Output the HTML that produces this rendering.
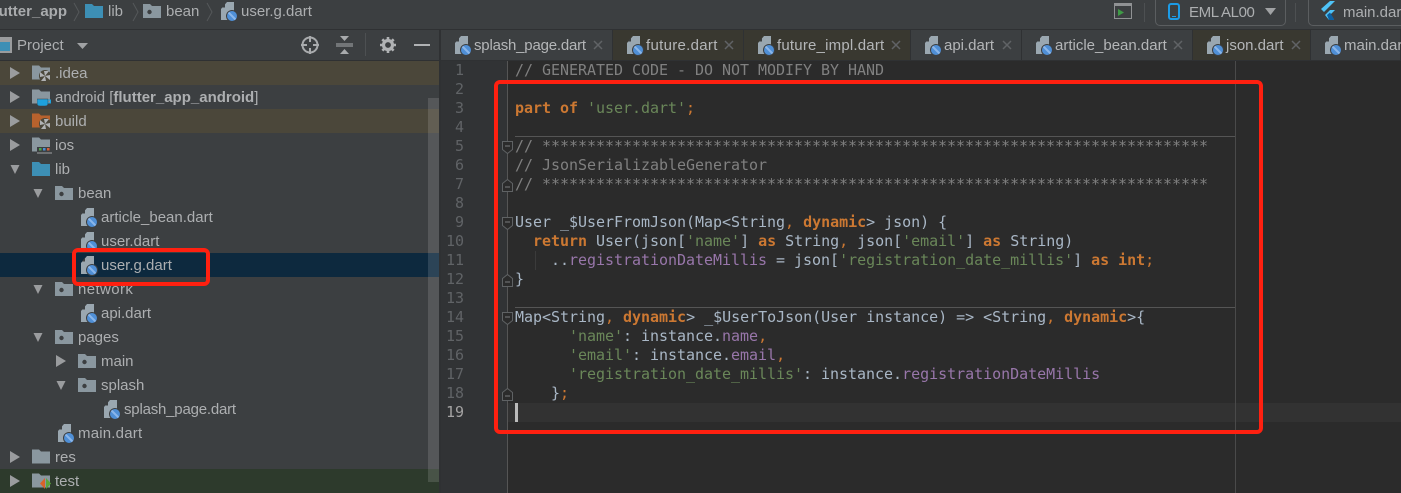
<!DOCTYPE html>
<html><head><meta charset="utf-8">
<style>
html,body{margin:0;padding:0;background:#3c3f41}
#r{position:relative;width:1401px;height:493px;overflow:hidden;background:#3c3f41;font-family:"Liberation Sans",sans-serif;font-size:15px;color:#adafb1}
#r div,#r svg{position:absolute}
.b{left:0;width:439px;height:24px}
.t{height:24px;line-height:24px;white-space:nowrap;margin-top:1px}
.tab{top:30px;height:30px;border-right:1px solid #2f3133;box-sizing:border-box}
.tl{top:31px;height:30px;line-height:30px;white-space:nowrap;color:#b4b6b8}
.x{top:40px;width:10px;height:10px}
.c{left:515px;height:19px;line-height:19px;white-space:pre;font-family:"DejaVu Sans Mono","Liberation Mono",monospace;font-size:15px;letter-spacing:-.03px;color:#a9b7c6}
.n{left:440px;width:24px;text-align:right;height:19px;line-height:19px;font-family:"DejaVu Sans Mono","Liberation Mono",monospace;font-size:15px;color:#606366}
i{font-style:normal}
.k{color:#cc7832;font-weight:bold}
.o{color:#cc7832}
.s{color:#6a8759}
.f{color:#9876aa}
.g{color:#808080}
</style></head><body>
<div id="r">
<svg width="0" height="0" style="left:0;top:0">
<defs>
<symbol id="dart" viewBox="0 0 18 20"><path d="M1 7 7 0h7v10l-4 2-2 6H1z" fill="#9aa7b0"/><path d="M5 1.500 2 5.500h3z" fill="#3c3f41"/><circle cx="12" cy="14" r="6" fill="#3c3f41"/><circle cx="12" cy="14" r="5" fill="#4f8fd6"/><path d="M8.500 10.500l7 7" stroke="#8ab6ea" stroke-width="2"/></symbol>
<symbol id="pkg" viewBox="0 0 18 14"><path d="M0 0h7l2 2h9v12H0z" fill="#8a979f"/><circle cx="6.500" cy="8" r="2.200" fill="#3c3f41"/></symbol>
<symbol id="fold" viewBox="0 0 18 14"><path d="M0 0h7l2 2h9v12H0z" fill="#8a979f"/></symbol>
<symbol id="blue" viewBox="0 0 18 14"><path d="M0 0h7l2 2h9v12H0z" fill="#3d8fb5"/></symbol>
<symbol id="tri" viewBox="0 0 10 12"><path d="M0 0l10 6-10 6z" fill="#9a9c9e"/></symbol>
<symbol id="trd" viewBox="0 0 10 10"><path d="M0 0h10L5 10z" fill="#9a9c9e"/></symbol>
<symbol id="fan" viewBox="0 0 12 12"><circle cx="6" cy="6" r="6" fill="#4b473a"/><path d="M6 6 5 1h5zM6 6l5-1v5zM6 6l1 5H2zM6 6 1 7V2z" fill="#b0b2b4"/></symbol>
<symbol id="cl" viewBox="0 0 10 10"><path d="M1 1l8 8M9 1l-8 8" stroke="#606366" stroke-width="1.500"/></symbol>
<symbol id="fm" viewBox="0 0 11 13"><path d="M.5 12.500h10v-8L5.500 .5 .5 4.500z" fill="#2b2b2b" stroke="#5f6264"/><path d="M3 8h5" stroke="#787b7d"/></symbol>
<symbol id="fe" viewBox="0 0 11 13"><path d="M.5 .5h10v8l-5 4-5-4z" fill="#2b2b2b" stroke="#5f6264"/><path d="M3 5h5" stroke="#787b7d"/></symbol>
</defs></svg>

<!-- top bar -->
<div style="left:0;top:29px;width:1401px;height:1px;background:#2f3133"></div>
<div class="t" style="right:1334px;top:-1px;font-weight:bold;color:#a9abad">flutter_app</div>
<svg style="left:73px;top:2px" width="8" height="20"><path d="M1 1l5 9-5 9" fill="none" stroke="#55585a"/></svg>
<svg style="left:85px;top:4px" width="18" height="14"><use href="#blue"/></svg>
<div class="t" style="left:108px;top:-1px">lib</div>
<svg style="left:132px;top:2px" width="8" height="20"><path d="M1 1l5 9-5 9" fill="none" stroke="#55585a"/></svg>
<svg style="left:143px;top:4px" width="18" height="14"><use href="#pkg"/></svg>
<div class="t" style="left:166px;top:-1px">bean</div>
<svg style="left:206px;top:2px" width="8" height="20"><path d="M1 1l5 9-5 9" fill="none" stroke="#55585a"/></svg>
<svg style="left:220px;top:2px" width="18" height="20"><use href="#dart"/></svg>
<div class="t" style="left:241px;top:-1px">user.g.dart</div>

<svg style="left:1114px;top:3px" width="19" height="16"><rect x=".5" y=".5" width="17" height="15" fill="#3c3f41" stroke="#909294"/><rect x="0" y="0" width="18" height="3" fill="#909294"/><path d="M4 6l6 3.500-6 3.500z" fill="#3f9b46"/></svg>
<div style="left:1144px;top:3px;width:1px;height:19px;background:#4d5052"></div>
<div style="left:1155px;top:-6px;width:129px;height:30px;border:1px solid #5b5e60;border-radius:5px"></div>
<svg style="left:1168px;top:3px" width="12" height="17"><rect x="1" y="1" width="10" height="15" rx="2" fill="none" stroke="#1c9be6" stroke-width="2"/><path d="M4 13.500h4" stroke="#1c9be6"/></svg>
<div class="t" style="left:1189px;top:0;letter-spacing:-.4px">EML AL00</div>
<svg style="left:1265px;top:8px" width="11" height="7"><path d="M0 0h11L5.500 7z" fill="#a0a2a4"/></svg>
<div style="left:1295px;top:3px;width:1px;height:19px;background:#4d5052"></div>
<div style="left:1308px;top:-6px;width:110px;height:30px;border:1px solid #5b5e60;border-radius:5px"></div>
<svg style="left:1320px;top:1px" width="16" height="20"><path d="M10 0h5L4 11 1 8z" fill="#4fc3f7"/><path d="M10 9h5l-5 5 4 5H9l-4-5z" fill="#4fc3f7"/><path d="M7 14l3-2.500 4 6.500v1H9z" fill="#0d5fa0"/></svg>
<div class="t" style="left:1343px;top:0">main.dart</div>

<!-- project header -->
<div style="left:0;top:60px;width:440px;height:1px;background:#2f3133"></div>
<svg style="left:0;top:37px" width="13" height="16"><rect x="-3" y="1" width="14" height="14" fill="#3d8fb5" stroke="#9a9c9e" stroke-width="2"/><rect x="0" y="2" width="11" height="3" fill="#9a9c9e"/></svg>
<div class="t" style="left:17px;top:33px">Project</div>
<svg style="left:77px;top:43px" width="11" height="6"><path d="M0 0h11L5.500 6z" fill="#a0a2a4"/></svg>
<svg style="left:300px;top:35px" width="20" height="20"><circle cx="10" cy="10" r="7.500" fill="none" stroke="#a9abad" stroke-width="2"/><path d="M10 1v6M10 13v6M1 10h6M13 10h6" stroke="#a9abad" stroke-width="2"/></svg>
<svg style="left:336px;top:36px" width="17" height="18"><path d="M0 8h17M0 10h17" stroke="#a9abad"/><path d="M4 0h9L8.500 5zM4 18h9l-4.500-5z" fill="#a9abad"/></svg>
<div style="left:365px;top:33px;width:1px;height:23px;background:#4d5052"></div>
<svg style="left:380px;top:37px" width="16" height="16" viewBox="0 0 16 16"><circle cx="8" cy="8" r="4.500" fill="none" stroke="#b0b2b4" stroke-width="3.200"/><path d="M8 0v16M0 8h16M2.300 2.300l11.400 11.400M13.700 2.300 2.300 13.700" stroke="#b0b2b4" stroke-width="2.600" stroke-dasharray="3 10 3"/></svg>
<div style="left:414px;top:44px;width:16px;height:2px;background:#b0b2b4"></div>

<!-- tree bands -->
<div class="b" style="top:61px;background:#4b473a"></div>
<div class="b" style="top:109px;background:#4b473a"></div>
<div class="b" style="top:253px;background:#0d293e"></div>
<div class="b" style="top:469px;background:#2d3a2c"></div>
<div style="left:428px;top:98px;width:11px;height:384px;background:rgba(255,255,255,.13)"></div>

<!-- tree rows -->
<svg style="left:10px;top:67px" width="10" height="12"><use href="#tri"/></svg>
<svg style="left:32px;top:65px" width="18" height="15"><use href="#fold"/></svg>
<svg style="left:39px;top:70px" width="12" height="12"><use href="#fan"/></svg>
<div class="t" style="left:55px;top:61px">.idea</div>

<svg style="left:10px;top:91px" width="10" height="12"><use href="#tri"/></svg>
<svg style="left:32px;top:89px" width="18" height="15"><use href="#fold"/></svg>
<svg style="left:37px;top:98px" width="15" height="9"><path d="M0 1h11v4q0 3-3 3H3Q0 8 0 5z" fill="#1ea0dc" stroke="#3c3f41" stroke-width=".5"/><path d="M11 2h2.500v3H11" fill="none" stroke="#1ea0dc"/></svg>
<div class="t" style="left:55px;top:85px">android [<b>flutter_app_android</b>]</div>

<svg style="left:10px;top:115px" width="10" height="12"><use href="#tri"/></svg>
<svg style="left:32px;top:113px" width="18" height="15" viewBox="0 0 18 14"><path d="M0 0h7l2 2h9v12H0z" fill="#b8622d"/></svg>
<svg style="left:39px;top:118px" width="12" height="12"><use href="#fan"/></svg>
<div class="t" style="left:55px;top:109px">build</div>

<svg style="left:10px;top:139px" width="10" height="12"><use href="#tri"/></svg>
<svg style="left:32px;top:137px" width="18" height="15"><use href="#fold"/></svg>
<svg style="left:37px;top:147px" width="15" height="7"><rect width="15" height="7" fill="#3c3f41"/><rect x="2" y="1" width="2.500" height="2.500" fill="#4fa54f"/><rect x="6" y="1" width="2.500" height="2.500" fill="#4f8fd6"/><rect x="10" y="1" width="2.500" height="2.500" fill="#d9603b"/><path d="M0 6h15" stroke="#a0a2a4"/></svg>
<div class="t" style="left:55px;top:133px">ios</div>

<svg style="left:10px;top:165px" width="10" height="9"><use href="#trd"/></svg>
<svg style="left:32px;top:162px" width="18" height="14"><use href="#blue"/></svg>
<div class="t" style="left:55px;top:157px">lib</div>

<svg style="left:33px;top:189px" width="10" height="9"><use href="#trd"/></svg>
<svg style="left:55px;top:186px" width="18" height="14"><use href="#pkg"/></svg>
<div class="t" style="left:78px;top:181px">bean</div>

<svg style="left:80px;top:208px" width="18" height="20"><use href="#dart"/></svg>
<div class="t" style="left:101px;top:205px">article_bean.dart</div>
<svg style="left:80px;top:232px" width="18" height="20"><use href="#dart"/></svg>
<div class="t" style="left:101px;top:229px">user.dart</div>
<svg style="left:80px;top:256px" width="18" height="20"><use href="#dart"/></svg>
<div class="t" style="left:101px;top:253px">user.g.dart</div>

<svg style="left:33px;top:285px" width="10" height="9"><use href="#trd"/></svg>
<svg style="left:55px;top:282px" width="18" height="14"><use href="#pkg"/></svg>
<div class="t" style="left:78px;top:277px;letter-spacing:.4px">network</div>
<svg style="left:80px;top:304px" width="18" height="20"><use href="#dart"/></svg>
<div class="t" style="left:101px;top:301px">api.dart</div>

<svg style="left:33px;top:333px" width="10" height="9"><use href="#trd"/></svg>
<svg style="left:55px;top:330px" width="18" height="14"><use href="#pkg"/></svg>
<div class="t" style="left:78px;top:325px">pages</div>

<svg style="left:56px;top:355px" width="10" height="12"><use href="#tri"/></svg>
<svg style="left:78px;top:354px" width="18" height="14"><use href="#pkg"/></svg>
<div class="t" style="left:101px;top:349px">main</div>

<svg style="left:56px;top:381px" width="10" height="9"><use href="#trd"/></svg>
<svg style="left:78px;top:378px" width="18" height="14"><use href="#pkg"/></svg>
<div class="t" style="left:101px;top:373px">splash</div>

<svg style="left:103px;top:400px" width="18" height="20"><use href="#dart"/></svg>
<div class="t" style="left:124px;top:397px;letter-spacing:-.2px">splash_page.dart</div>

<svg style="left:57px;top:424px" width="18" height="20"><use href="#dart"/></svg>
<div class="t" style="left:78px;top:421px;letter-spacing:.2px">main.dart</div>

<svg style="left:10px;top:451px" width="10" height="12"><use href="#tri"/></svg>
<svg style="left:32px;top:449px" width="18" height="15"><use href="#fold"/></svg>
<div class="t" style="left:55px;top:445px">res</div>

<svg style="left:10px;top:475px" width="10" height="12"><use href="#tri"/></svg>
<svg style="left:32px;top:473px" width="18" height="15"><use href="#fold"/></svg>
<svg style="left:39px;top:477px" width="13" height="13"><path d="M6 1 1 6.500 6 12z" fill="#d9622b"/><path d="M7 1l5 5.500L7 12z" fill="#5aa53b"/></svg>
<div class="t" style="left:55px;top:469px">test</div>

<!-- divider -->
<div style="left:439px;top:29px;width:2px;height:464px;background:#2f3133"></div>

<!-- tabs -->
<div style="left:441px;top:60px;width:960px;height:1px;background:#2f3133"></div>
<div class="tab" style="left:441px;width:172px"></div>
<div class="tab" style="left:613px;width:131px;background:#393830"></div>
<div class="tab" style="left:744px;width:167px;background:#393830"></div>
<div class="tab" style="left:911px;width:111px"></div>
<div class="tab" style="left:1022px;width:171px"></div>
<div class="tab" style="left:1193px;width:118px;background:#393830"></div>
<div class="tab" style="left:1311px;width:90px"></div>

<svg style="left:454px;top:36px" width="18" height="20"><use href="#dart"/></svg>
<div class="tl" style="left:474px;letter-spacing:-.2px">splash_page.dart</div>
<svg class="x" style="left:593px" width="10" height="10"><use href="#cl"/></svg>
<svg style="left:626px;top:36px" width="18" height="20"><use href="#dart"/></svg>
<div class="tl" style="left:646px;letter-spacing:.3px">future.dart</div>
<svg class="x" style="left:724px" width="10" height="10"><use href="#cl"/></svg>
<svg style="left:757px;top:36px" width="18" height="20"><use href="#dart"/></svg>
<div class="tl" style="left:777px;letter-spacing:.2px">future_impl.dart</div>
<svg class="x" style="left:891px" width="10" height="10"><use href="#cl"/></svg>
<svg style="left:924px;top:36px" width="18" height="20"><use href="#dart"/></svg>
<div class="tl" style="left:944px">api.dart</div>
<svg class="x" style="left:1002px" width="10" height="10"><use href="#cl"/></svg>
<svg style="left:1035px;top:36px" width="18" height="20"><use href="#dart"/></svg>
<div class="tl" style="left:1055px">article_bean.dart</div>
<svg class="x" style="left:1173px" width="10" height="10"><use href="#cl"/></svg>
<svg style="left:1206px;top:36px" width="18" height="20"><use href="#dart"/></svg>
<div class="tl" style="left:1226px">json.dart</div>
<svg class="x" style="left:1291px" width="10" height="10"><use href="#cl"/></svg>
<svg style="left:1324px;top:36px" width="18" height="20"><use href="#dart"/></svg>
<div class="tl" style="left:1344px">main.dart</div>

<!-- editor -->
<div style="left:441px;top:61px;width:960px;height:432px;background:#2b2b2b"></div>
<div style="left:441px;top:61px;width:66px;height:432px;background:#313335"></div>
<div style="left:507px;top:61px;width:1px;height:432px;background:#555"></div>
<div style="left:508px;top:403px;width:893px;height:19px;background:#323232"></div>
<div style="left:1235px;top:61px;width:1px;height:432px;background:#4a4a4a"></div>
<div style="left:515px;top:136px;width:720px;height:1px;background:#555"></div>
<div style="left:515px;top:307px;width:720px;height:1px;background:#555"></div>
<div style="left:535px;top:251px;width:1px;height:19px;background:#3b3b3b"></div>

<div class="n" style="top:61px">1</div>
<div class="n" style="top:80px">2</div>
<div class="n" style="top:99px">3</div>
<div class="n" style="top:118px">4</div>
<div class="n" style="top:137px">5</div>
<div class="n" style="top:156px">6</div>
<div class="n" style="top:175px">7</div>
<div class="n" style="top:194px">8</div>
<div class="n" style="top:213px">9</div>
<div class="n" style="top:232px">10</div>
<div class="n" style="top:251px">11</div>
<div class="n" style="top:270px">12</div>
<div class="n" style="top:289px">13</div>
<div class="n" style="top:308px">14</div>
<div class="n" style="top:327px">15</div>
<div class="n" style="top:346px">16</div>
<div class="n" style="top:365px">17</div>
<div class="n" style="top:384px">18</div>
<div class="n" style="top:403px;color:#a4a3a3">19</div>

<svg style="left:502px;top:141px" width="11" height="13"><use href="#fe"/></svg>
<svg style="left:502px;top:179px" width="11" height="13"><use href="#fm"/></svg>
<svg style="left:502px;top:217px" width="11" height="13"><use href="#fe"/></svg>
<svg style="left:502px;top:274px" width="11" height="13"><use href="#fm"/></svg>
<svg style="left:502px;top:312px" width="11" height="13"><use href="#fe"/></svg>
<svg style="left:502px;top:388px" width="11" height="13"><use href="#fm"/></svg>

<div class="c g" style="top:61px">// GENERATED CODE - DO NOT MODIFY BY HAND</div>
<div class="c" style="top:99px"><i class="k">part of</i> <i class="s">'user.dart'</i><i class="o">;</i></div>
<div class="c g" style="top:137px">// **************************************************************************</div>
<div class="c g" style="top:156px">// JsonSerializableGenerator</div>
<div class="c g" style="top:175px">// **************************************************************************</div>
<div class="c" style="top:213px">User _$UserFromJson(Map&lt;String<i class="o">,</i> <i class="k">dynamic</i>&gt; json) {</div>
<div class="c" style="top:232px">  <i class="k">return</i> User(json[<i class="s">'name'</i>] <i class="k">as</i> String<i class="o">,</i> json[<i class="s">'email'</i>] <i class="k">as</i> String)</div>
<div class="c" style="top:251px">    ..<i class="f">registrationDateMillis</i> = json[<i class="s">'registration_date_millis'</i>] <i class="k">as</i> <i class="k">int</i><i class="o">;</i></div>
<div class="c" style="top:270px">}</div>
<div class="c" style="top:308px">Map&lt;String<i class="o">,</i> <i class="k">dynamic</i>&gt; _$UserToJson(User instance) =&gt; &lt;String<i class="o">,</i> <i class="k">dynamic</i>&gt;{</div>
<div class="c" style="top:327px">      <i class="s">'name'</i>: instance.<i class="f">name</i><i class="o">,</i></div>
<div class="c" style="top:346px">      <i class="s">'email'</i>: instance.<i class="f">email</i><i class="o">,</i></div>
<div class="c" style="top:365px">      <i class="s">'registration_date_millis'</i>: instance.<i class="f">registrationDateMillis</i></div>
<div class="c" style="top:384px">    }<i class="o">;</i></div>
<div style="left:515px;top:403px;width:3px;height:19px;background:#bbb"></div>

<!-- annotations -->
<div style="left:494px;top:80px;width:761px;height:346px;border:4px solid #ff2010;border-radius:6px"></div>
<div style="left:72px;top:248px;width:130px;height:30px;border:4px solid #ff2010;border-radius:6px"></div>
</div>
</body></html>
